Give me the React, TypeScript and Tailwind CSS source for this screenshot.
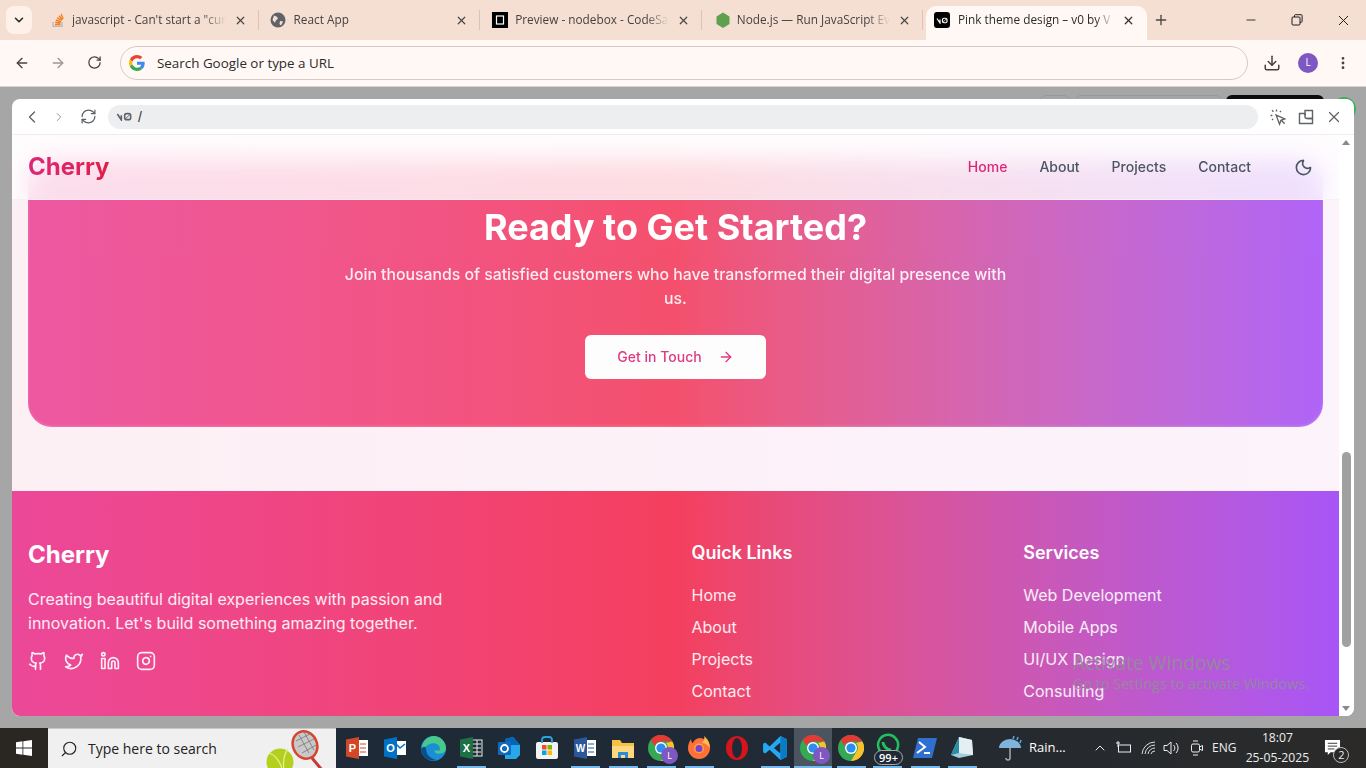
import React from "react";
import { ChevronLeft, ChevronRight, ChevronDown, RefreshCw, ArrowLeft, ArrowRight, RotateCw, X, Plus, Minus, Download, MoreVertical, Moon, Github, Twitter, Linkedin, Instagram, Search, ChevronUp } from "lucide-react";

const tabs = [
  { title: "javascript - Can't start a \"cur", icon: "so" },
  { title: "React App", icon: "globe" },
  { title: "Preview - nodebox - CodeSa", icon: "cs" },
  { title: "Node.js — Run JavaScript Ev", icon: "node" },
];

function Favicon({ kind }: { kind: string }) {
  if (kind === "so")
    return (
      <svg width="16" height="16" viewBox="0 0 16 16" fill="none" stroke="#f48024" strokeWidth="1.4">
        <path d="M3 10v4.2h9V10" stroke="#bcbbbb" />
        <path d="M5 12.500h5.500M5.200 10.300l5.300.9M5.900 8l5 2M7.200 5.700l4.400 3M9 3.800l3.400 4M11.200 2l1.900 5" />
      </svg>
    );
  if (kind === "globe")
    return (
      <svg className="-ml-[2px]" width="16" height="16" viewBox="0 0 16 16">
        <circle cx="8" cy="8" r="7.500" fill="#5f6368" />
        <path d="M4 3.500l3 1.200 1 2-2 1.500-1 2.500L2.500 8zM10 9l3.200.5L11 13.500 9.500 12z" fill="#f5dfd3" />
      </svg>
    );
  if (kind === "cs")
    return (
      <svg className="-ml-[1px]" width="16" height="16" viewBox="0 0 16 16">
        <rect width="16" height="16" fill="#000" />
        <rect x="4.500" y="4" width="7" height="8" fill="none" stroke="#fff" strokeWidth="1.200" />
      </svg>
    );
  if (kind === "node")
    return (
      <svg width="16" height="16" viewBox="0 0 16 16">
        <path d="M8 0.500l6.500 4v7.500L8 16l-6.500-4V4.500z" fill="#5fa04e" />
      </svg>
    );
  return null;
}

function V0Mark({ className, color = "#fff" }: { className?: string; color?: string }) {
  return (
    <svg className={className} viewBox="0 0 24 14" fill="none" stroke={color} strokeWidth="2.400">
      <path d="M2 3l6 9V5" />
      <rect x="13" y="2.500" width="9" height="9" rx="3" />
      <path d="M14 10.500l7-7" strokeWidth="1.500" />
    </svg>
  );
}

function Tab({ title, icon }: { title: string; icon: string }) {
  return (
    <div className="relative flex h-full w-[221.6px] shrink-0 items-center pl-[13px] pr-[12px]">
      <span className="flex w-[22px] shrink-0 items-center"><Favicon kind={icon} /></span>
      <span className="min-w-0 flex-1 overflow-hidden whitespace-nowrap text-[11.8px] text-[#45413f] [mask-image:linear-gradient(to_right,black_85%,transparent)]">{title}</span>
      <X size={13} strokeWidth={2.2} className="ml-2 shrink-0 text-[#4a4542]" />
      <span className="absolute right-0 top-[4px] h-[20px] w-px bg-[#dcc3b5]" />
    </div>
  );
}

function GoogleG() {
  return (
    <svg width="16" height="16" viewBox="0 0 48 48">
      <path fill="#EA4335" d="M24 9.500c3.500 0 6.700 1.200 9.200 3.600l6.900-6.900C35.900 2.400 30.500 0 24 0 14.600 0 6.500 5.400 2.600 13.200l8 6.200C12.400 13.700 17.700 9.500 24 9.500z" />
      <path fill="#4285F4" d="M46.980 24.550c0-1.570-.15-3.090-.38-4.550H24v9.020h12.940c-.58 2.960-2.260 5.480-4.780 7.180l7.730 6c4.510-4.180 7.090-10.360 7.090-17.650z" />
      <path fill="#FBBC05" d="M10.530 28.590A14.500 14.500 0 0 1 9.500 24c0-1.600.28-3.150 1.030-4.590l-7.980-6.190A24 24 0 0 0 0 24c0 3.880.92 7.540 2.560 10.780l7.970-6.190z" />
      <path fill="#34A853" d="M24 48c6.480 0 11.930-2.130 15.890-5.810l-7.730-6c-2.150 1.450-4.920 2.300-8.160 2.300-6.260 0-11.570-4.220-13.470-9.910l-7.980 6.190C6.510 42.620 14.620 48 24 48z" />
    </svg>
  );
}

function ChromeIcon({ size = 26, badge = false }: { size?: number; badge?: boolean }) {
  return (
    <span className="relative inline-flex">
      <svg width={size} height={size} viewBox="0 0 26 26">
        <circle cx="13" cy="13" r="13" fill="#34a853" />
        <path d="M13 0a13 13 0 0 1 11.300 6.500H13a6.500 6.500 0 0 0-6.200 4.500L2.700 5A13 13 0 0 1 13 0z" fill="#e53935" />
        <path d="M24.300 6.500A13 13 0 0 1 13 26l5.600-9.700A6.500 6.500 0 0 0 18 8z" fill="#fbc02d" />
        <circle cx="13" cy="13" r="6" fill="#fff" />
        <circle cx="13" cy="13" r="4.600" fill="#2d8cf0" />
      </svg>
      {badge && (
        <span className="absolute -bottom-[3px] -right-[4px] flex h-[17px] w-[17px] items-center justify-center rounded-full bg-[#7e57c2] text-[9px] text-white">L</span>
      )}
    </span>
  );
}

function TaskIcon({ children, running = true, active = false, className = "" }: { children: React.ReactNode; running?: boolean; active?: boolean; className?: string }) {
  return (
    <div className={`relative flex h-10 w-[38px] shrink-0 items-center justify-center ${active ? "bg-[#4a5560]" : ""} ${className}`}>
      {children}
      {running && <span className={`absolute bottom-0 h-[2px] bg-[#76b9ed] ${active ? "left-0 right-0" : "left-[4.5px] right-[4.5px]"}`} />}
    </div>
  );
}

function NavBar() {
  return (
    <div className="absolute left-0 right-[15px] top-0 z-10 flex h-[65px] items-center justify-between border-b border-[#fdeef5] bg-white/80 px-4 backdrop-blur-md">
      <span className="bg-gradient-to-r from-[#db2777] to-[#e11d48] bg-clip-text text-2xl font-bold text-transparent">Cherry</span>
      <div className="flex items-center gap-8 text-sm font-medium text-[#4b5563]">
        <span className="text-[#db2777]">Home</span>
        <span>About</span>
        <span>Projects</span>
        <span>Contact</span>
        <span className="flex h-10 w-10 items-center justify-center"><Moon size={19} strokeWidth={2} /></span>
      </div>
    </div>
  );
}

function FooterCol({ title, items }: { title: string; items: string[] }) {
  return (
    <div>
      <h3 className="mb-4 text-lg font-semibold">{title}</h3>
      <ul className="flex flex-col gap-2 text-white/90">
        {items.map((i) => <li key={i}>{i}</li>)}
      </ul>
    </div>
  );
}

export default function App() {
  return (
    <div className="relative flex h-[768px] w-[1366px] flex-col overflow-hidden bg-[#a6a6a6] font-['Inter',sans-serif]">
      {/* tab strip */}
      <div className="flex h-10 shrink-0 items-start bg-[#f5dfd3] pt-[6px] font-['Open_Sans',sans-serif]">
        <div className="ml-[6px] flex h-7 w-[26px] items-center justify-center rounded-lg bg-[#fdf1ea]">
          <ChevronDown size={14} strokeWidth={2.8} className="text-[#2b2b2b]" />
        </div>
        <div className="ml-[5px] flex h-[28px] items-center">
          {tabs.map((t) => <Tab key={t.title} {...t} />)}
        </div>
        <div className="ml-[2.6px] flex h-[34px] w-[221px] shrink-0 items-center rounded-t-[10px] bg-[#fff8f5] pb-[6px] pl-2 pr-3">
          <span className="mr-2 flex h-4 w-4 shrink-0 items-center justify-center rounded-[3px] bg-black"><V0Mark className="w-3" /></span>
          <span className="min-w-0 flex-1 overflow-hidden whitespace-nowrap text-[11.8px] text-[#2b2b2b] [mask-image:linear-gradient(to_right,black_88%,transparent)]">Pink theme design – v0 by V</span>
          <X size={13} strokeWidth={2.4} className="ml-2 shrink-0 text-[#333]" />
        </div>
        <Plus size={16} strokeWidth={2} className="ml-[6px] mt-[6px] text-[#4a4542]" />
        <div className="-mt-[6px] ml-auto flex h-10 items-center text-[#1f1f1f]">
          <span className="flex w-[46px] justify-center"><Minus size={14} strokeWidth={1.5} /></span>
          <span className="flex w-[46px] justify-center">
            <svg width="12" height="12" viewBox="0 0 12 12" fill="none" stroke="#1f1f1f" strokeWidth="1"><rect x="1" y="3" width="8" height="8" rx="1" /><path d="M3.500 3V1.500a.8.8 0 0 1 .8-.8h6a.8.8 0 0 1 .8.8v6a.8.8 0 0 1-.8.8H9" /></svg>
          </span>
          <span className="flex w-[46px] justify-center"><X size={17} strokeWidth={1.4} /></span>
        </div>
      </div>

      {/* toolbar */}
      <div className="flex h-[47px] shrink-0 items-center border-b border-[#d9d5d2] bg-[#fff8f5] pb-px text-[#45413f]">
        <span className="flex w-[44px] justify-center"><ArrowLeft size={16} strokeWidth={2} /></span>
        <span className="flex w-[28px] justify-center"><ArrowRight size={16} strokeWidth={2} className="text-[#9c9794]" /></span>
        <span className="flex w-[44px] justify-center"><RotateCw size={15} strokeWidth={2} /></span>
        <div className="ml-[4px] flex h-[34px] w-[1128px] items-center rounded-full border border-[#d6cac4] pl-[8px] font-['Open_Sans',sans-serif] text-[13.4px] text-[#2b2b2b]">
          <span className="mr-[12px] flex w-[16px] justify-center"><GoogleG /></span>
          <span className="pt-px">Search Google or type a URL</span>
        </div>
        <span className="ml-[14px] flex w-[20px] justify-center"><Download size={18} strokeWidth={2} /></span>
        <span className="ml-[16px] flex h-5 w-5 items-center justify-center rounded-full bg-[#7e57c2] font-['Open_Sans',sans-serif] text-[10px] text-white">L</span>
        <span className="ml-[15px] flex w-[20px] justify-center"><MoreVertical size={16} strokeWidth={2.2} /></span>
      </div>

      {/* dimmed page with preview panel */}
      <div className="relative min-h-0 flex-1 px-3 pb-3 pt-[12px]">
        <div className="absolute right-[296px] top-[8px] h-6 w-[30px] rounded-md border border-[#999]" />
        <div className="absolute right-[144px] top-[8px] h-6 w-[147px] rounded-md border border-[#999]" />
        <div className="absolute right-[42px] top-[8px] h-6 w-[98px] rounded-md bg-[#0c0c0c]" />
        <div className="absolute right-[10px] top-[10px] h-6 w-6 rounded-full bg-[#3fae5a]" />
        <div className="relative flex h-full w-full flex-col overflow-hidden rounded-lg bg-white">
          {/* preview toolbar */}
          <div className="flex h-[36px] shrink-0 items-center border-b border-[#eceef0] text-[#5f6368]">
            <span className="flex w-[40px] justify-center"><ChevronLeft size={20} strokeWidth={1.6} /></span>
            <span className="flex w-[14px] justify-center"><ChevronRight size={20} strokeWidth={1.6} className="text-[#8a8d90]" /></span>
            <span className="flex w-[44px] justify-center"><RefreshCw size={17} strokeWidth={1.8} /></span>
            <div className="-ml-[2px] flex h-6 w-[1150px] items-center rounded-full bg-[#eceef0] pl-2">
              <V0Mark className="w-[16px]" color="#5f6368" />
              <span className="ml-[6px] font-['Liberation_Sans',sans-serif] text-sm text-[#333]">/</span>
            </div>
            <svg className="ml-[11px]" width="18" height="18" viewBox="0 0 24 24" fill="none" stroke="#5f6368" strokeWidth="1.800">
              <path d="M9.500 9.500l4.500 12 2-5 5-2z" />
              <path d="M16 16l5 5M4 3l2 2M10 2v2.500M2 10h2.500M4 16l1.500-1.500M16 4l-1.500 1.500" />
            </svg>
            <svg className="ml-[10px]" width="18" height="18" viewBox="0 0 18 18" fill="none" stroke="#5f6368" strokeWidth="1.400">
              <path d="M8 7.500V2.500h7.500v8H10.500" />
              <path d="M8 5.500H2.500v10h13v-5H10a2 2 0 0 1-2-2z" />
            </svg>
            <X size={18} strokeWidth={1.6} className="ml-[10px]" />
          </div>

          {/* preview body */}
          <div className="relative min-h-0 flex-1 overflow-hidden">
            <NavBar />
            <div className="mr-[15px] h-full overflow-hidden bg-gradient-to-r from-[#fdf0f5] to-[#fcf3fb]">
              <div className="mx-4 mb-16 mt-6 rounded-3xl bg-gradient-to-r from-[#ec4899] via-[#f43f5e] to-[#a855f7] px-4 pb-12 pt-12 text-center text-white opacity-90 shadow-[inset_0_-1px_3px_rgba(255,255,255,0.2)]">
                <h2 className="mb-4 text-4xl font-bold">Ready to Get Started?</h2>
                <p className="mx-auto mb-6 max-w-2xl text-[15.8px] font-medium leading-6 text-white/90">Join thousands of satisfied customers who have transformed their digital presence with us.</p>
                <div className="inline-flex h-11 items-center gap-4 rounded-md bg-white px-8 text-sm font-medium text-[#db2777]">
                  Get in Touch
                  <ArrowRight size={16} />
                </div>
              </div>
              <div className="bg-gradient-to-r from-[#ec4899] via-[#f43f5e] to-[#a855f7] px-4 py-12 text-white">
                <div className="grid grid-cols-4 gap-8">
                  <div className="col-span-2">
                    <h3 className="mb-4 text-2xl font-bold">Cherry</h3>
                    <p className="mb-4 max-w-md text-white/90">Creating beautiful digital experiences with passion and innovation. Let's build something amazing together.</p>
                    <div className="flex gap-4 text-white/90">
                      <Github size={20} />
                      <Twitter size={20} />
                      <Linkedin size={20} />
                      <Instagram size={20} />
                    </div>
                  </div>
                  <FooterCol title="Quick Links" items={["Home", "About", "Projects", "Contact"]} />
                  <FooterCol title="Services" items={["Web Development", "Mobile Apps", "UI/UX Design", "Consulting"]} />
                </div>
              </div>
            </div>
            {/* scrollbar */}
            <div className="absolute bottom-0 right-0 top-0 z-20 w-[15px] bg-white">
              <span className="absolute left-[3px] top-[5px] h-0 w-0 border-x-[4.5px] border-b-[5px] border-x-transparent border-b-[#8a8a8a]" />
              <span className="absolute left-[3px] top-[317px] h-[195px] w-[9px] rounded-full bg-[#a0a0a0]" />
              <span className="absolute bottom-[5px] left-[3px] h-0 w-0 border-x-[4.5px] border-t-[5px] border-x-transparent border-t-[#8a8a8a]" />
            </div>
          </div>
        </div>
      </div>

      {/* taskbar */}
      <div className="flex h-10 shrink-0 items-center bg-gradient-to-r from-[#1d2a38] via-[#1f2a36] to-[#2b2a29] font-['Open_Sans',sans-serif] text-white">
        <div className="flex h-full w-12 items-center justify-center bg-[#2a2622]">
          <svg width="16" height="16" viewBox="0 0 16 16" fill="#fff"><path d="M0 2.200l6.500-.9v6.300H0zM7.300 1.200L16 0v7.600H7.300zM0 8.400h6.500v6.300L0 13.800zM7.300 8.400H16V16l-8.700-1.200z" /></svg>
        </div>
        <div className="relative flex h-full w-[288px] items-center border-t border-[#c8c8c8] bg-[#f0f0f0] pl-[12px] text-[14px] text-[#222]">
          <Search size={18} strokeWidth={1.5} className="mr-[10px] -scale-x-100" />
          Type here to search
          <svg className="absolute right-[6px] top-0" width="64" height="40" viewBox="0 0 64 40">
            <circle cx="14" cy="33" r="13.500" fill="#b4cf1e" />
            <path d="M3 24q11 4 14 20M22 20q-6 8-4 22" fill="none" stroke="#e6f08a" strokeWidth="1.300" />
            <ellipse cx="39" cy="16" rx="12" ry="14" transform="rotate(-25 39 16)" fill="#c8c8c8" stroke="#d8432e" strokeWidth="2.500" />
            <path d="M33 6l10 18M38 3l10 18M30 12l16-8M32 18l16-8M36 24l14-8" stroke="#777" strokeWidth="0.800" />
            <path d="M46 29l10 12" stroke="#c53a3a" strokeWidth="3" />
          </svg>
        </div>
        <div className="ml-[2px] flex h-full items-center">
          <TaskIcon running={false}>
            <svg width="24" height="24" viewBox="0 0 24 24"><rect x="10" y="4" width="13" height="16" fill="#fff" /><path d="M15 8h6M15 12h6M15 16h6" stroke="#d24726" /><path d="M1 3.500L14 1v22L1 20.500z" fill="#d24726" /><text x="7.500" y="16" textAnchor="middle" fontSize="11" fontWeight="700" fill="#fff" fontFamily="Liberation Sans, sans-serif">P</text></svg>
          </TaskIcon>
          <TaskIcon running={false}>
            <svg width="24" height="24" viewBox="0 0 24 24"><rect x="10" y="5" width="13" height="14" fill="#fff" /><path d="M13 8l4 4 5-4" fill="none" stroke="#0072c6" strokeWidth="1.500" /><path d="M1 3.500L14 1v22L1 20.500z" fill="#0072c6" /><text x="7.500" y="16" textAnchor="middle" fontSize="11" fontWeight="700" fill="#fff" fontFamily="Liberation Sans, sans-serif">O</text></svg>
          </TaskIcon>
          <TaskIcon running={false}>
            <svg width="25" height="25" viewBox="0 0 24 24"><circle cx="12" cy="12" r="12" fill="#1b8fd6" /><path d="M12 0a12 12 0 0 1 12 12c0 3-3 5-7 5-3 0-4-1-4-3h5c1-4-2-7-6-7-4 0-8 3-11 7A12 12 0 0 1 12 0z" fill="#49c88b" /><path d="M5 13c0 5 4 9 10 10-7 2-14-2-15-10 1-3 5-4 5 0z" fill="#0b4f8a" /></svg>
          </TaskIcon>
          <TaskIcon>
            <svg width="24" height="24" viewBox="0 0 24 24"><rect x="10" y="4" width="13" height="16" fill="none" stroke="#e6efe9" /><path d="M14 8h8M14 12h8M14 16h8M18 4v16" stroke="#e6efe9" /><path d="M1 3.500L14 1v22L1 20.500z" fill="#1d7145" /><text x="7.500" y="16" textAnchor="middle" fontSize="11" fontWeight="700" fill="#fff" fontFamily="Liberation Sans, sans-serif">X</text></svg>
          </TaskIcon>
          <TaskIcon running={false}>
            <svg width="24" height="24" viewBox="0 0 24 24"><path d="M8 3l8-2 7 8v10l-4 4H8z" fill="#28a8ea" /><path d="M8 3l8-2 7 8H8z" fill="#0364b8" /><rect x="1" y="6" width="13" height="13" rx="1" fill="#0f6cbd" /><circle cx="7.500" cy="12.500" r="3.500" fill="none" stroke="#fff" strokeWidth="1.800" /></svg>
          </TaskIcon>
          <TaskIcon running={false}>
            <svg width="24" height="24" viewBox="0 0 24 24"><rect x="1" y="6" width="22" height="17" rx="2" fill="#f3f3f3" /><path d="M7 7V4a3 3 0 0 1 3-3h4a3 3 0 0 1 3 3v3" fill="none" stroke="#29a4dd" strokeWidth="1.800" /><rect x="7" y="9" width="4.500" height="4.500" fill="#f25022" /><rect x="12.500" y="9" width="4.500" height="4.500" fill="#7fba00" /><rect x="7" y="14.500" width="4.500" height="4.500" fill="#00a4ef" /><rect x="12.500" y="14.500" width="4.500" height="4.500" fill="#ffb900" /></svg>
          </TaskIcon>
          <TaskIcon>
            <svg width="24" height="24" viewBox="0 0 24 24"><rect x="10" y="4" width="13" height="16" fill="#fff" /><path d="M15 8h6M15 12h6M15 16h6" stroke="#2b579a" /><path d="M1 3.500L14 1v22L1 20.500z" fill="#2b579a" /><text x="7.500" y="16" textAnchor="middle" fontSize="10" fontWeight="700" fill="#fff" fontFamily="Liberation Sans, sans-serif">W</text></svg>
          </TaskIcon>
          <TaskIcon>
            <svg width="24" height="24" viewBox="0 0 24 24"><path d="M1 4h8l2 3h12v15H1z" fill="#f5c044" /><path d="M1 10h22v12H1z" fill="#fcd980" /><path d="M7 22v-6h10v6h-3v-3h-4v3z" fill="#2b8bd6" /></svg>
          </TaskIcon>
          <TaskIcon><ChromeIcon badge /></TaskIcon>
          <TaskIcon>
            <svg width="24" height="24" viewBox="0 0 24 24"><path d="M12 2c6 0 11 4 11 10a11 11 0 0 1-22 0C1 9 2 6 4 3c0 2 1 4 2 4 1-3 3-4 6-5z" fill="#ff7139" /><path d="M17 0c4 3 6 7 6 12-2-3-5-5-8-5 2-2 3-4 2-7z" fill="#ffbd4f" /><path d="M7 13a5 5 0 0 1 10-1c0 3-2 5-5 5s-5-2-5-4z" fill="#ffa436" /><circle cx="12" cy="12.500" r="3.500" fill="#7b3fd6" /></svg>
          </TaskIcon>
          <TaskIcon running={false}>
            <svg width="24" height="26" viewBox="0 0 24 26"><ellipse cx="12" cy="13" rx="11" ry="12" fill="#d5141c" /><ellipse cx="12" cy="13" rx="5" ry="10" fill="#1f2a36" /></svg>
          </TaskIcon>
          <TaskIcon>
            <svg width="26" height="26" viewBox="0 0 24 24"><path d="M17 1l6 3v16l-6 3L7 13.500 3 17l-2-1V8l2-1 4 3.500z" fill="#23a9f2" /><path d="M17 7l-6 5 6 5z" fill="#1f2a36" /><path d="M17 1l6 3v16l-6 3z" fill="#0a7cc4" /></svg>
          </TaskIcon>
          <TaskIcon active><ChromeIcon badge /></TaskIcon>
          <TaskIcon><ChromeIcon /></TaskIcon>
          <TaskIcon className="-ml-[2px]">
            <span className="relative flex h-full w-full items-center justify-center">
              <svg className="-mt-[5px]" width="26" height="26" viewBox="0 0 26 26" fill="none" stroke="#21c25e" strokeWidth="2.500"><path d="M4 22l1.500-5A10 10 0 1 1 9 20.500z" /><path d="M9 9c0 4 4 8 8 8" strokeWidth="3" /></svg>
              <span className="absolute bottom-[3px] left-[6px] flex h-[15px] w-[29px] items-center justify-center rounded-full border border-[#aaa] bg-[#1f2a36] text-[11px] font-semibold leading-none text-white">99+</span>
            </span>
          </TaskIcon>
          <TaskIcon>
            <svg width="24" height="22" viewBox="0 0 24 22"><path d="M5 1h19l-5 20H0z" fill="#2f6fd0" /><path d="M6 5l6 5-8 6" fill="none" stroke="#fff" strokeWidth="2" /><path d="M11 16h6" stroke="#fff" strokeWidth="2" /></svg>
          </TaskIcon>
          <TaskIcon className="-ml-[1px]">
            <svg width="24" height="26" viewBox="0 0 24 26"><path d="M9 2l13 3 1 15-14 3-8-3z" fill="#9fd0dc" /><path d="M9 2l13 3 1 15-14-2z" fill="#e3eff1" /><path d="M1 20l8-18v16z" fill="#2e8ba6" /></svg>
          </TaskIcon>
        </div>
        <div className="ml-[16px] flex items-center text-[13px]">
          <svg width="26" height="28" viewBox="0 0 26 28" fill="none"><path d="M2 14a11 9 0 0 1 22 0z" fill="#7fb4dd" /><path d="M13 14v10q0 2-2 2t-2-2" stroke="#aaa" strokeWidth="1.500" /><path d="M17 2l-1 3M21 3l-1 3M24 6l-1 3" stroke="#5aa6e0" strokeWidth="1.500" /></svg>
          <span className="ml-[6px] w-[40px] whitespace-nowrap">Rain...</span>
        </div>
        <div className="ml-[23px] flex items-center text-[#eee]">
          <ChevronUp size={16} strokeWidth={1.5} />
          <svg className="ml-[7px]" width="18" height="16" viewBox="0 0 18 16" fill="none" stroke="#eee"><rect x="3.500" y="5" width="12" height="7" /><path d="M1 3h4M3 1v6" /></svg>
          <svg className="ml-[8px]" width="16" height="16" viewBox="0 0 16 16" fill="none" stroke="#ddd"><path d="M1 14a13 13 0 0 1 13-12M4 14a10 10 0 0 1 10-9M7 14a7 7 0 0 1 7-6M10 14a4 4 0 0 1 4-3" /></svg>
          <svg className="ml-[6px]" width="18" height="16" viewBox="0 0 18 16" fill="none" stroke="#eee"><path d="M1 5.500h3L8 2v12l-4-3.500H1zM10.500 5a4 4 0 0 1 0 6M13 3a7 7 0 0 1 0 10" /></svg>
          <svg className="ml-[9px]" width="14" height="18" viewBox="0 0 14 18" fill="none" stroke="#eee"><rect x="1.500" y="5" width="8" height="8" rx="1.500" /><path d="M9.500 8l3-1.500v5l-3-1.500M3 2h5M3 16h5" /></svg>
          <span className="ml-[8px] text-[12px]">ENG</span>
          <div className="ml-[10px] flex w-[62px] flex-col items-center whitespace-nowrap text-[12.2px] leading-[20px]">
            <span>18:07</span>
            <span>25-05-2025</span>
          </div>
          <div className="relative ml-[16px] flex w-[22px]">
            <svg width="17" height="16" viewBox="0 0 18 17" fill="#fff"><path d="M1 0h16v13H7l-3 3v-3H1z" /><path d="M4 3.500h10M4 6.500h10M4 9.500h7" stroke="#333" /></svg>
            <span className="absolute -bottom-[7px] left-[9px] flex h-[16px] w-[16px] items-center justify-center rounded-full border border-[#bbb] bg-[#2b2a29] text-[11px]">2</span>
          </div>
        </div>
      </div>

      {/* activation watermark */}
      <div className="pointer-events-none absolute left-[1073px] top-[650px] z-30 font-['Open_Sans',sans-serif] text-[#8f8f96]/90">
        <div className="text-[19.2px] leading-[26px]">Activate Windows</div>
        <div className="-mt-[2px] text-[14.4px] leading-[20px]">Go to Settings to activate Windows.</div>
      </div>
    </div>
  );
}
